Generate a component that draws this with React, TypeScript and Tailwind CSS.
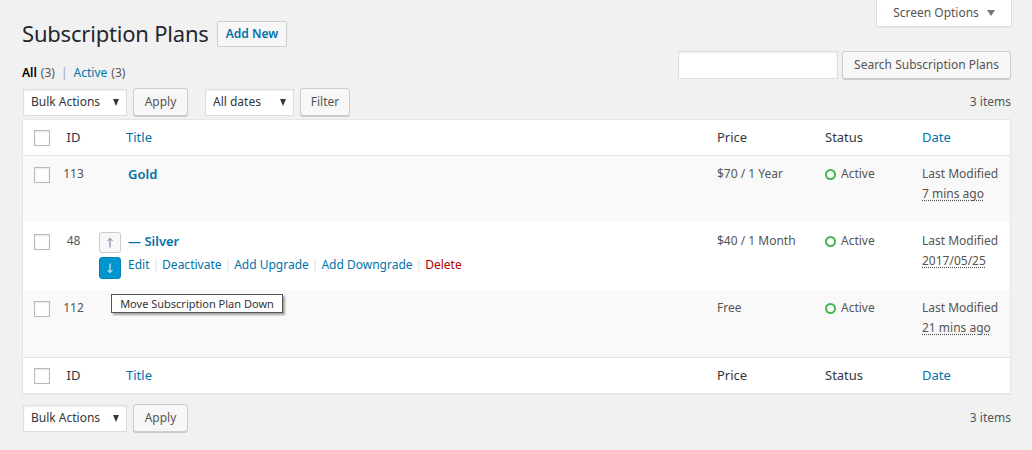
import React from "react";

const F = { fontFamily: '"Noto Sans", "Open Sans", sans-serif' };

function Checkbox() {
  return (
    <span className="inline-block w-4 h-4 border border-[#b4b9be] bg-white shadow-[inset_0_1px_2px_rgba(0,0,0,0.1)]" />
  );
}

function Tri({ w = 7, h = 5, color = "#32373c" }: { w?: number; h?: number; color?: string }) {
  return (
    <svg width={w} height={h} viewBox={`0 0 ${w} ${h}`}>
      <polygon points={`0,0 ${w},0 ${w / 2},${h}`} fill={color} />
    </svg>
  );
}

function Select({ label, width }: { label: string; width: string }) {
  return (
    <div
      className={`flex items-center justify-between h-[27px] ${width} bg-white border border-[#ddd] shadow-[inset_0_1px_2px_rgba(0,0,0,0.07)] pl-[7px] pr-[7px] text-[12px] text-[#32373c]`}
    >
      <span>{label}</span>
      <Tri w={6} h={7} />
    </div>
  );
}

function Btn({ label, className = "" }: { label: string; className?: string }) {
  return (
    <div
      className={`flex items-center justify-center h-[28px] bg-[#f7f7f7] border border-[#ccc] rounded-[3px] shadow-[0_1px_0_#ccc] text-[12px] text-[#555] ${className}`}
    >
      {label}
    </div>
  );
}

function Status() {
  return (
    <div className="flex items-center h-5">
      <span className="inline-block w-[11px] h-[11px] rounded-full border-[2.5px] border-[#46b450] mr-[5px]" />
      <span>Active</span>
    </div>
  );
}

function DateCell({ when }: { when: string }) {
  return (
    <div className="leading-[19.7px]">
      <div>Last Modified</div>
      <div>
        <span className="underline decoration-dotted decoration-[#555] underline-offset-[2px]">{when}</span>
      </div>
    </div>
  );
}

function HeadRow({ top }: { top: boolean }) {
  return (
    <div
      className={`flex h-[36px] items-center text-[13px] text-[#32373c] ${top ? "border-b border-[#e1e1e1]" : "border-t border-[#e1e1e1]"}`}
    >
      <div className="w-[35px] pl-[11px] flex items-center">
        <Checkbox />
      </div>
      <div className="w-[31px] text-center">ID</div>
      <div className="flex-1 pl-[37px] text-[#0073aa]">Title</div>
      <div className="w-[108px] pl-[10px]">Price</div>
      <div className="w-[97px] pl-[10px]">Status</div>
      <div className="w-[98px] pl-[10px] text-[#0073aa]">Date</div>
    </div>
  );
}

function ArrowSvg({ down, color }: { down?: boolean; color: string }) {
  return (
    <svg width="8" height="11" viewBox="0 0 8 11">
      <g stroke={color} strokeWidth="1" fill="none" transform={down ? "rotate(180 4 5.5)" : undefined}>
        <line x1="4" y1="1.5" x2="4" y2="10.5" />
        <polyline points="1.5,4 4,1.5 6.5,4" />
      </g>
    </svg>
  );
}

type RowProps = {
  id: string;
  price: string;
  when: string;
  bg: string;
  h: string;
  pt: string;
  children: React.ReactNode;
};

function Row({ id, price, when, bg, h, pt, children }: RowProps) {
  return (
    <div className={`flex ${bg} ${h} ${pt} text-[12px] text-[#555] leading-5`}>
      <div className="w-[35px] pl-[11px] pt-[3px]">
        <Checkbox />
      </div>
      <div className="w-[31px] text-center">{id}</div>
      <div className="flex-1 pl-[10px] relative">{children}</div>
      <div className="w-[108px] pl-[10px]">{price}</div>
      <div className="w-[97px] pl-[10px]">
        <Status />
      </div>
      <div className="w-[98px] pl-[10px]">
        <DateCell when={when} />
      </div>
    </div>
  );
}

function Sep() {
  return <span className="mx-[3px] text-[#ddd]">|</span>;
}

export default function App() {
  return (
    <div style={F} className="relative min-h-[450px] bg-[#f1f1f1] text-[12px] text-[#444] overflow-hidden">
      {/* Screen Options tab */}
      <div className="absolute right-[20px] top-0 w-[136px] h-[27px] bg-white border border-t-0 border-[#ddd] shadow-[0_1px_1px_rgba(0,0,0,0.04)] flex items-center justify-center gap-[8px] text-[12px] text-[#555]">
        <span>Screen Options</span>
        <Tri w={8} h={6} color="#72777c" />
      </div>

      <div className="ml-[22px] mr-[21px]">
        {/* title */}
        <div className="flex items-center pt-[19px] h-[48px]">
          <h1 className="text-[22px] leading-[29px] text-[#23282d] font-normal tracking-[-0.2px]">Subscription Plans</h1>
          <div className="ml-[8px] h-[26px] px-[8px] flex items-center bg-[#f7f7f7] border border-[#ccc] rounded-[2px] text-[12px] font-semibold text-[#0073aa]">
            Add New
          </div>
        </div>

        {/* subsubsub + search */}
        <div className="flex justify-between mt-[3px] h-[28px]">
          <div className="pt-[12px] leading-5 text-[12px] text-[#555] flex items-start h-[28px]">
            <span className="text-black font-semibold">All</span>
            <span className="ml-[4px]">(3)</span>
            <span className="mx-[6px] text-[#a0a5aa]">|</span>
            <span className="text-[#0073aa]">Active</span>
            <span className="ml-[4px]">(3)</span>
          </div>
          <div className="flex items-start gap-[4px]">
            <div className="w-[160px] h-[28px] bg-white border border-[#ddd] shadow-[inset_0_1px_2px_rgba(0,0,0,0.07)]" />
            <Btn label="Search Subscription Plans" className="w-[169px]" />
          </div>
        </div>

        {/* top tablenav */}
        <div className="flex items-center justify-between mt-[9px] h-[28px]">
          <div className="flex items-center">
            <div className="ml-px">
              <Select label="Bulk Actions" width="w-[104px]" />
            </div>
            <Btn label="Apply" className="ml-[6px] w-[55px]" />
            <div className="ml-[17px]">
              <Select label="All dates" width="w-[89px]" />
            </div>
            <Btn label="Filter" className="ml-[6px] w-[50px]" />
          </div>
          <div className="text-[12px] text-[#555]">3 items</div>
        </div>

        {/* table */}
        <div className="mt-[3px] bg-white border border-[#e5e5e5] shadow-[0_1px_1px_rgba(0,0,0,0.04)]">
          <HeadRow top />

          <Row id="113" price="$70 / 1 Year" when="7 mins ago" bg="bg-[#f9f9f9]" h="h-[66px]" pt="pt-[8px]">
            <div className="pl-[29px] text-[13px] font-semibold text-[#0073aa] leading-5">Gold</div>
          </Row>

          <Row id="48" price="$40 / 1 Month" when="2017/05/25" bg="bg-white" h="h-[68px]" pt="pt-[9px]">
            <div className="flex gap-[7px]">
              <div className="flex flex-col gap-[4px] pt-[1px]">
                <div className="w-[22px] h-[21px] flex items-center justify-center bg-[#f7f7f7] border border-[#ccc] rounded-[3px]">
                  <ArrowSvg color="#7a6f9b" />
                </div>
                <div className="w-[22px] h-[22px] flex items-center justify-center bg-[#0096cd] border border-[#0085ba] rounded-[3px]">
                  <ArrowSvg down color="#ffffff" />
                </div>
              </div>
              <div>
                <div className="text-[13px] font-semibold text-[#0073aa] leading-5">— Silver</div>
                <div className="mt-[4px] leading-5 flex items-center text-[12px]">
                  <span className="text-[#0073aa]">Edit</span>
                  <Sep />
                  <span className="text-[#0073aa]">Deactivate</span>
                  <Sep />
                  <span className="text-[#0073aa]">Add Upgrade</span>
                  <Sep />
                  <span className="text-[#0073aa]">Add Downgrade</span>
                  <Sep />
                  <span className="text-[#a00]">Delete</span>
                </div>
              </div>
            </div>
          </Row>

          <Row id="112" price="Free" when="21 mins ago" bg="bg-[#f9f9f9]" h="h-[67px]" pt="pt-[8px]">
            <div className="absolute left-[22px] -top-[4px] w-[172px] h-[19px] flex items-center justify-center bg-white border border-[#555] shadow-[2px_2px_2px_rgba(0,0,0,0.35)] text-[11px] text-[#333] whitespace-nowrap">
              Move Subscription Plan Down
            </div>
          </Row>

          <HeadRow top={false} />
        </div>

        {/* bottom tablenav */}
        <div className="flex items-center justify-between mt-[10px] h-[28px]">
          <div className="flex items-center">
            <div className="ml-px">
              <Select label="Bulk Actions" width="w-[104px]" />
            </div>
            <Btn label="Apply" className="ml-[6px] w-[55px]" />
          </div>
          <div className="text-[12px] text-[#555]">3 items</div>
        </div>
      </div>
    </div>
  );
}
